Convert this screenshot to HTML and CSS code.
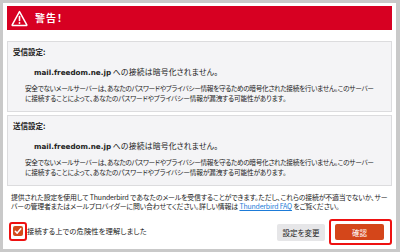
FILE: index.html
```html
<!DOCTYPE html>
<html lang="ja">
<head>
<meta charset="utf-8">
<link rel="stylesheet" href="styles.css">
</head>
<body>
<div class="dialog">
  <div class="header">
    <svg class="warn-icon" width="17" height="17" viewBox="0 0 17 17">
      <path d="M8.5 1.6 L15.8 14.8 Q16.1 15.6 15.2 15.6 L1.8 15.6 Q0.9 15.6 1.2 14.8 Z" fill="none" stroke="#fff" stroke-width="1.5" stroke-linejoin="round"/>
      <rect x="7.7" y="5.8" width="1.6" height="5.4" rx="0.6" fill="#fff"/>
      <circle cx="8.5" cy="13" r="0.95" fill="#fff"/>
    </svg>
    <span class="title">警告！</span>
  </div>

  <div class="box">
    <div class="label">受信設定:</div>
    <div class="host"><b class="hostname">mail.freedom.ne.jp</b> <span class="host-ja">への接続は暗号化されません。</span></div>
    <div class="desc">
      <span class="line first">安全でないメールサーバーは、あなたのパスワードやプライバシー情報を守るための暗号化された接続を行いません。このサーバー</span>
      <span class="line">に接続することによって、あなたのパスワードやプライバシー情報が漏洩する可能性があります。</span>
    </div>
  </div>

  <div class="box second">
    <div class="label">送信設定:</div>
    <div class="host"><b class="hostname">mail.freedom.ne.jp</b> <span class="host-ja">への接続は暗号化されません。</span></div>
    <div class="desc">
      <span class="line first">安全でないメールサーバーは、あなたのパスワードやプライバシー情報を守るための暗号化された接続を行いません。このサーバー</span>
      <span class="line">に接続することによって、あなたのパスワードやプライバシー情報が漏洩する可能性があります。</span>
    </div>
  </div>

  <div class="note">
    <span class="line">提供された設定を使用して Thunderbird であなたのメールを受信することができます。ただし、これらの接続が不適当でないか、サー</span>
    <span class="line">バーの管理者またはメールプロバイダーに問い合わせてください。詳しい情報は <a class="link" href="#">Thunderbird FAQ</a> をご覧ください。</span>
  </div>

  <div class="footer">
    <label class="agree">
      <span class="check">
        <svg width="10" height="10" viewBox="0 0 10 10"><path d="M2.3 5.2 L4.2 7.1 L7.8 2.8" fill="none" stroke="#fff" stroke-width="1.5" stroke-linecap="round" stroke-linejoin="round"/></svg>
      </span>
      <span class="agree-text">接続する上での危険性を理解しました</span>
    </label>
    <div class="buttons">
      <button class="btn">設定を変更</button>
      <button class="btn primary">確認</button>
    </div>
  </div>
</div>
</body>
</html>
```

FILE: styles.css
```css
html, body {
  margin: 0;
  padding: 0;
}
body {
  background: #c9c9c9;
  width: 400px;
  height: 252px;
  overflow: hidden;
  font-family: "Noto Sans CJK JP", sans-serif;
  color: #222;
}
.dialog {
  margin: 3px 4px 0 3px;
  width: 393px;
  height: 246px;
  box-sizing: border-box;
  background: #fff;
  padding: 3px 4px 0 4px;
  overflow: hidden;
}
.header {
  height: 24px;
  background: #d70022;
  display: flex;
  align-items: center;
  padding-left: 4px;
  gap: 7px;
}
.warn-icon {
  display: block;
}
.title {
  color: #fff;
  font-weight: 700;
  font-size: 10px;
  line-height: 24px;
  font-feature-settings: "palt";
  letter-spacing: 1px;
}
.box {
  margin-top: 11px;
  border: 1px solid #dcdcde;
  background: #f4f4f6;
  padding: 5px 5px 8px 5px;
}
.box.second {
  margin-top: 3px;
}
.label {
  font-weight: 700;
  font-size: 7.5px;
  line-height: 10px;
  height: 10px;
}
.host {
  margin-top: 9px;
  margin-left: 21px;
  height: 12px;
  line-height: 12px;
  white-space: nowrap;
  font-size: 7.8px;
}
.hostname {
  font-family: "DejaVu Sans", sans-serif;
  font-size: 7.2px;
  font-weight: 700;
}
.host-ja {
  font-feature-settings: "palt";
  letter-spacing: 0.2px;
}
.desc {
  margin-top: 5px;
  margin-left: 12px;
  font-size: 6.7px;
  font-feature-settings: "palt";
  letter-spacing: -0.15px;
}
.desc .first {
  letter-spacing: -0.35px;
}
.line {
  display: block;
  white-space: nowrap;
  height: 10px;
  line-height: 10px;
}
.note {
  margin: 7px 0 0 4px;
  font-size: 6.9px;
  font-feature-settings: "palt";
  letter-spacing: -0.15px;
}
.note .line {
  height: 9px;
  line-height: 9px;
}
.link {
  color: #1d7bd8;
  text-decoration: underline;
}
.footer {
  margin-top: 8px;
  height: 26px;
  display: flex;
  align-items: center;
  justify-content: space-between;
}
.agree {
  display: flex;
  align-items: center;
  gap: 4px;
  padding-left: 6px;
  margin-top: -2px;
}
.check {
  position: relative;
  width: 10px;
  height: 10px;
  border-radius: 2px;
  background: #d44a1c;
  display: flex;
  align-items: center;
  justify-content: center;
}
.check svg {
  display: block;
}
.check::after {
  content: "";
  position: absolute;
  left: -4px;
  top: -4px;
  width: 14px;
  height: 15px;
  border: 2px solid #ee1111;
  border-radius: 3px;
}
.agree-text {
  font-size: 7.3px;
  line-height: 10px;
  font-feature-settings: "palt";
  letter-spacing: 0.1px;
  color: #222;
}
.buttons {
  display: flex;
  align-items: center;
  gap: 10px;
  padding-right: 8px;
}
.btn {
  font-family: "Noto Sans CJK JP", sans-serif;
  font-size: 7.5px;
  font-feature-settings: "palt";
  height: 17px;
  width: 48px;
  border: none;
  border-radius: 2px;
  background: #e6e6e8;
  color: #222;
  padding: 0;
  margin: 0;
}
.btn.primary {
  position: relative;
  width: 49px;
  height: 16px;
  background: #d4461a;
  color: #fff;
}
.btn.primary::after {
  content: "";
  position: absolute;
  left: -6px;
  top: -5px;
  width: 59px;
  height: 22px;
  border: 2px solid #ee1111;
  border-radius: 3px;
}
```
